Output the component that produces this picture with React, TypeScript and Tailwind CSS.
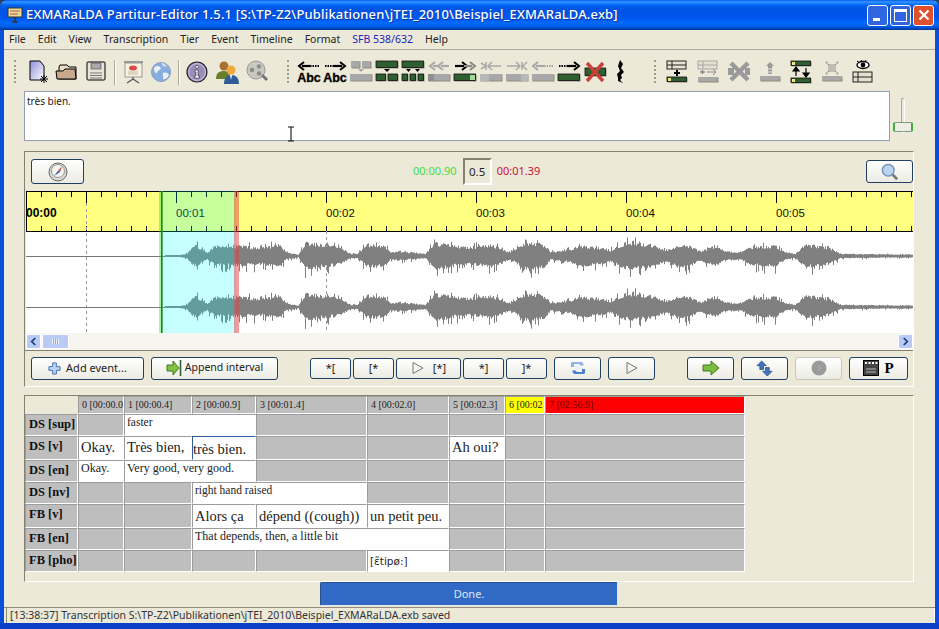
import { useMemo } from "react";
import type { ReactNode } from "react";

const SANS = "font-['Noto_Sans','Liberation_Sans',sans-serif]";
const SERIF = "font-['Liberation_Serif',serif]";

// ---- small svg parts for toolbar icons (24x24 box)
const GREEN = "#2f5f30";
const GRAY = "#a8a8a8";

function Bar({ x, y, w, h, c = GREEN }: { x: number; y: number; w: number; h: number; c?: string }) {
  const green = c === GREEN;
  return (
    <>
      <rect x={x + 0.5} y={y + 0.5} width={w} height={h} fill="#8d8a7c" />
      <rect x={x} y={y} width={w - 0.5} height={h - 0.5} fill={c} stroke={green ? "#111" : "none"} strokeWidth={green ? 0.8 : 0} />
    </>
  );
}

function Arrow({ x1, x2, y, c = "#000", dash = false }: { x1: number; x2: number; y: number; c?: string; dash?: boolean }) {
  const d = x2 > x1 ? 1 : -1;
  const mid = dash ? x1 + (x2 - x1) * 0.4 : x1;
  return (
    <>
      {dash && <path d={`M${x1} ${y}H${mid}`} stroke={c} strokeWidth="2" strokeDasharray="1.5 1" />}
      <path d={`M${mid} ${y}H${x2 - d * 3}`} stroke={c} strokeWidth="2.2" />
      <path d={`M${x2 - d * 5} ${y - 4}L${x2} ${y}L${x2 - d * 5} ${y + 4}`} fill="none" stroke={c} strokeWidth="2" />
    </>
  );
}

function Ic({ children }: { children: ReactNode }) {
  return (
    <svg viewBox="0 0 24 24" className="h-6 w-6 shrink-0">
      {children}
    </svg>
  );
}

function Grip({ className }: { className: string }) {
  return <div className={`h-[23px] w-[2px] shrink-0 border-l-2 border-dotted border-[#a09c8c] ${className}`} />;
}

function Sep({ className }: { className: string }) {
  return <div className={`h-[25px] w-[2px] shrink-0 border-l border-r border-l-[#aca899] border-r-white ${className}`} />;
}

function AbcIcon({ left }: { left: boolean }) {
  return (
    <Ic>
      {left ? <Arrow x1={22} x2={2} y={6} dash /> : <Arrow x1={2} x2={22} y={6} dash />}
      <text x="12" y="22" textAnchor="middle" fontSize="12.5" fontWeight="700" fontFamily="Liberation Sans" fill="#000" stroke="#000" strokeWidth=".3">
        Abc
      </text>
    </Ic>
  );
}

function Toolbar() {
  return (
    <div className="flex h-10 items-start pt-[10px]">
      <Grip className="ml-[10px]" />
      <div className="ml-[10px] flex gap-[5px]">
        <Ic>
          <defs>
            <linearGradient id="docg" x1="0" y1="0" x2="1" y2="1">
              <stop offset="0" stopColor="#8f8fd8" />
              <stop offset="1" stopColor="#ffffff" />
            </linearGradient>
          </defs>
          <path d="M4 1H14L18 6V20H4Z" fill="url(#docg)" stroke="#000" />
          <path d="M18 15V23M14 19H22M15 16L21 22M21 16L15 22" stroke="#000" strokeWidth="1" />
        </Ic>
        <Ic>
          <path d="M4 7L5 5H12L14 7H21V19H4Z" fill="#e9dcc0" stroke="#000" />
          <path d="M2 19L1 11H8L10 9H20L21 19Z" fill="#c9a98e" stroke="#000" />
        </Ic>
        <Ic>
          <rect x="3" y="2" width="18" height="18" rx="1" fill="#e8e4d8" stroke="#000" />
          <rect x="7" y="3" width="10" height="6" fill="#a8a8a8" stroke="#444" strokeWidth=".6" />
          <path d="M6 13H18M6 15.5H18M6 18H18" stroke="#777" />
        </Ic>
      </div>
      <Sep className="ml-[6px]" />
      <div className="ml-[5px] flex gap-[4px]">
        <Ic>
          <rect x="3" y="1" width="19" height="2" fill="#999" />
          <rect x="4" y="3" width="17" height="14" fill="#f7f1e2" stroke="#999" />
          <ellipse cx="12" cy="8" rx="4" ry="2.5" fill="#d84b4b" />
          <path d="M7 12H17M7 14H17" stroke="#c8b8a0" />
          <path d="M12 17V19M12 19L6 23M12 19L18 23" stroke="#555" strokeWidth="1.2" />
        </Ic>
        <Ic>
          <circle cx="12" cy="12" r="9.5" fill="#86aee0" stroke="#8b9cb4" />
          <path d="M5 8C8 5 10 6 12 8C11 11 8 10 8 13C6 14 5 11 5 8ZM14 13C17 12 19 13 20 15C18 19 15 20 14 19C15 17 13 15 14 13Z" fill="#e9f0f8" />
          <path d="M12 3C15 3 17 5 18 7L14 6Z" fill="#d9e6f5" />
        </Ic>
      </div>
      <Sep className="ml-[5px]" />
      <div className="ml-[5px] flex gap-[6px]">
        <Ic>
          <circle cx="12" cy="12" r="10" fill="#9b8dbb" stroke="#222" strokeWidth="1.2" />
          <circle cx="12" cy="12" r="8.4" fill="none" stroke="#d8d0e8" strokeWidth=".8" />
          <circle cx="12" cy="6.8" r="1.5" fill="#fff" stroke="#222" strokeWidth=".6" />
          <path d="M10 10H13V16H14.5V18H9.5V16H11V12H10Z" fill="#fff" stroke="#222" strokeWidth=".6" />
        </Ic>
        <Ic>
          <circle cx="9" cy="6" r="4.5" fill="#a6712f" />
          <path d="M1 19C1 13 4 11 9 11C14 11 15 14 15 19Z" fill="#6a7f2d" />
          <circle cx="16" cy="10" r="4.5" fill="#f1a83c" />
          <path d="M9 24C9 18 12 15 16 15C21 15 24 18 24 24Z" fill="#2f5c98" />
          <path d="M15 15L16 20L17 15Z" fill="#fff" />
        </Ic>
        <Ic>
          <circle cx="11" cy="10" r="9" fill="#c8c8c0" stroke="#999" />
          <circle cx="7" cy="10" r="2.2" fill="#8d8d88" />
          <circle cx="14" cy="6.5" r="2.2" fill="#8d8d88" />
          <circle cx="14" cy="13.5" r="2.2" fill="#8d8d88" />
          <path d="M17 15L22 20" stroke="#777" strokeWidth="3" />
        </Ic>
      </div>
      <Grip className="ml-[18px]" />
      <div className="ml-[8px] flex gap-[2px]">
        <AbcIcon left />
        <AbcIcon left={false} />
        <Ic>
          <Bar x={2} y={1} w={9} h={7} c={GRAY} />
          <Bar x={13} y={1} w={9} h={7} c={GRAY} />
          <path d="M9 9H15L12 12Z" fill={GRAY} />
          <Bar x={1} y={14} w={22} h={7} c={GRAY} />
        </Ic>
        <Ic>
          <Bar x={1} y={1} w={22} h={7} />
          <path d="M9 9H15L12 12Z" fill="#000" />
          <Bar x={1} y={14} w={10} h={7} />
          <Bar x={13} y={14} w={10} h={7} />
        </Ic>
        <Ic>
          <Bar x={1} y={1} w={22} h={7} />
          <path d="M5 9H10L7.5 12ZM14 9H19L16.5 12Z" fill="#000" />
          <Bar x={1} y={14} w={6} h={7} />
          <Bar x={9} y={14} w={6} h={7} />
          <Bar x={17} y={14} w={6} h={7} />
        </Ic>
        <Ic>
          <Arrow x1={12} x2={3} y={6} c={GRAY} />
          <Arrow x1={22} x2={11} y={6} c={GRAY} />
          <Bar x={1} y={14} w={22} h={7} c={GRAY} />
          <rect x="1" y="14" width="6" height="7" fill="#8f8f8f" />
        </Ic>
        <Ic>
          <Arrow x1={2} x2={14} y={6} />
          <Arrow x1={12} x2={22} y={6} c="#888" />
          <Bar x={1} y={14} w={22} h={7} />
          <rect x="17" y="15" width="5" height="5" fill="#a8d8a0" />
        </Ic>
        <Ic>
          <path d="M2 3L7 6L2 9M7 2V10M9 6H22" fill="none" stroke={GRAY} strokeWidth="1.5" />
          <path d="M13 2L9 6L13 10" fill="none" stroke={GRAY} strokeWidth="1.5" />
          <Bar x={1} y={14} w={22} h={7} c={GRAY} />
          <rect x="1" y="14" width="9" height="7" fill="#b8b8b8" />
        </Ic>
        <Ic>
          <path d="M2 6H15M11 2L15 6L11 10M17 2V10M22 2L18 6L22 10" fill="none" stroke={GRAY} strokeWidth="1.5" />
          <Bar x={1} y={14} w={22} h={7} c={GRAY} />
          <rect x="16" y="14" width="7" height="7" fill="#b8b8b8" />
        </Ic>
        <Ic>
          <Arrow x1={22} x2={2} y={6} c={GRAY} dash />
          <Bar x={1} y={14} w={22} h={7} c={GRAY} />
        </Ic>
        <Ic>
          <Arrow x1={2} x2={22} y={6} dash />
          <Bar x={1} y={14} w={22} h={7} />
        </Ic>
        <Ic>
          <Bar x={2} y={8} w={21} h={8} />
          <path d="M4 3L20 21M20 3L4 21" stroke="#c9403a" strokeWidth="3.4" />
        </Ic>
        <Ic>
          <path d="M11 0L14 4L12 8L15 12L12 15L13 18L11 20L14 23L9 21L9 18L8 14L11 11L9 6Z" fill="#000" />
        </Ic>
      </div>
      <Grip className="ml-[21px]" />
      <div className="ml-[9px] flex gap-[7px]">
        <Ic>
          <rect x="2" y="1" width="19" height="8" fill="#e6e0d0" stroke="#222" />
          <path d="M2 5H21M7 1V9" stroke="#222" />
          <path d="M12 10V16M9 13H15" stroke="#000" strokeWidth="2" />
          <Bar x={2} y={17} w={20} h={5} />
          <rect x="3" y="18" width="3" height="3" fill="#f3e58a" />
        </Ic>
        <Ic>
          <rect x="2" y="1" width="19" height="8" fill="#e6e0d0" stroke={GRAY} />
          <path d="M2 5H21M7 1V9" stroke={GRAY} />
          <path d="M4 12H9M6.5 10V14" stroke="#888" strokeWidth="1.4" />
          <path d="M11 12H20M17 9L20 12L17 15" fill="none" stroke="#888" />
          <Bar x={2} y={17} w={20} h={5} c={GRAY} />
        </Ic>
        <Ic>
          <path d="M4 3L21 20M21 3L4 20" stroke="#9a9a9a" strokeWidth="4.5" />
          <rect x="1" y="8" width="6" height="7" fill="#9a9a9a" />
          <rect x="18" y="8" width="5" height="7" fill="#9a9a9a" />
        </Ic>
        <Ic>
          <path d="M12 2L16 6H14V14H10V6H8Z" fill="#999" />
          <path d="M10 9H14M10 12H14" stroke="#ece9d8" />
          <Bar x={2} y={16} w={20} h={5} c={GRAY} />
        </Ic>
        <Ic>
          <Bar x={2} y={1} w={20} h={5} />
          <rect x="3" y="2" width="3" height="3" fill="#f3e58a" />
          <path d="M7 16V9M4 11L7 7L10 11ZM17 8V15M14 13L17 17L20 13Z" fill="#000" stroke="#000" strokeWidth="1.2" />
          <Bar x={2} y={18} w={20} h={5} />
          <rect x="3" y="19" width="3" height="3" fill="#f3e58a" />
        </Ic>
        <Ic>
          <path d="M6 2L18 14M18 2L6 14" stroke="#a0a0a0" strokeWidth="2" strokeDasharray="2 1" />
          <circle cx="12" cy="8" r="4" fill="#bdbdb4" />
          <Bar x={2} y={16} w={20} h={5} c={GRAY} />
        </Ic>
        <Ic>
          <ellipse cx="12" cy="5" rx="6" ry="3.5" fill="#fff" stroke="#000" strokeWidth="1.4" />
          <circle cx="12" cy="5" r="2.4" fill="#000" />
          <path d="M6 1L9 3M10 0L11 2M15 0L14 2" stroke="#000" />
          <rect x="2" y="12" width="19" height="10" fill="#e6e0d0" stroke="#222" />
          <path d="M2 17H21M7 12V22" stroke="#222" />
        </Ic>
      </div>
    </div>
  );
}

// ---- waveform
const ENVELOPE: [number, number][] = [
  [165, 1], [178, 1], [186, 3], [195, 15], [200, 10], [207, 5], [215, 14], [230, 12], [240, 14], [250, 12], [265, 12],
  [280, 16], [285, 5], [298, 2], [305, 18], [325, 15], [340, 12], [350, 3], [357, 3], [367, 16], [385, 13], [390, 5],
  [400, 6], [425, 3], [435, 18], [470, 11], [490, 16], [510, 5], [525, 18], [545, 15], [550, 5], [570, 9], [582, 14],
  [600, 11], [610, 8], [625, 18], [650, 16], [665, 8], [680, 15], [690, 13], [700, 6], [715, 14], [725, 6], [740, 5],
  [750, 12], [775, 14], [785, 5], [795, 3], [805, 16], [830, 11], [840, 3], [912, 2],
];

function envAt(x: number) {
  for (let i = 1; i < ENVELOPE.length; i++) {
    const [x0, a0] = ENVELOPE[i - 1];
    const [x1, a1] = ENVELOPE[i];
    if (x <= x1) return a0 + ((a1 - a0) * (x - x0)) / (x1 - x0);
  }
  return 2;
}

function makeWave(center: number) {
  let seed = 7;
  const rnd = () => {
    seed = (seed * 16807) % 2147483647;
    return seed / 2147483647;
  };
  let d = "";
  for (let x = 165; x < 913; x++) {
    const env = envAt(x);
    const up = Math.max(1, env * (0.55 + 0.25 * rnd() + (rnd() > 0.8 ? 0.35 * rnd() : 0)));
    const down = Math.max(1, env * (0.55 + 0.25 * rnd() + (rnd() > 0.75 ? 0.6 * rnd() : 0)));
    d += `M${x - 26 + 0.5} ${center - up}V${center + down}`;
  }
  return d;
}

function Timeline() {
  const wave1 = useMemo(() => makeWave(65), []);
  const wave2 = useMemo(() => makeWave(116), []);
  const minor = Array.from({ length: 60 }, (_, i) => i * 15 + 0.5);
  const labels = [
    [150, "00:01"],
    [300, "00:02"],
    [450, "00:03"],
    [600, "00:04"],
    [750, "00:05"],
  ] as const;
  return (
    <svg viewBox="0 0 887 142" className="ml-px block h-[142px] w-[887px] bg-white">
      <rect x="0" y="0" width="887" height="41" fill="#ffff80" />
      <path d="M0 0.5H887M0 40.5H887" stroke="#000" />
      {minor.map((x) => (
        <path key={x} d={`M${x} 0V6M${x} 35V40`} stroke="#000" />
      ))}
      <path d="M0.5 0V40M60.5 0V12M150.5 0V12M300.5 0V12M450.5 0V12M600.5 0V12M750.5 0V12" stroke="#000" />
      <path d="M60.5 12V142M300.5 40V142" stroke="#999" strokeDasharray="3 3" />
      <path d="M0 65.5H140M0 116.5H140" stroke="#777" />
      <path d={wave1} stroke="#808080" />
      <path d={wave2} stroke="#808080" />
      <text x="0" y="26" fontSize="12" fontWeight="700" fontFamily="Liberation Sans" fill="#000">
        00:00
      </text>
      {labels.map(([x, t]) => (
        <text key={t} x={x} y="26" fontSize="11.5" fontFamily="Liberation Sans" fill="#111">
          {t}
        </text>
      ))}
      <rect x="136" y="0" width="74" height="142" fill="#00ffff" opacity=".22" />
      <rect x="133" y="0" width="4" height="142" fill="#38d038" opacity=".4" />
      <rect x="135" y="0" width="1.5" height="142" fill="#0f8a1f" />
      <rect x="208" y="0" width="5" height="142" fill="#e04040" opacity=".5" />
    </svg>
  );
}

function ScrollBtn({ dir }: { dir: "l" | "r" }) {
  return (
    <div className="flex h-[15px] w-[15px] items-center justify-center rounded-[2px] border border-white bg-[#b9cbf5]">
      <svg viewBox="0 0 8 10" className="h-[9px] w-[7px]">
        <path d={dir === "l" ? "M6 1L2 5L6 9" : "M2 1L6 5L2 9"} fill="none" stroke="#1d3b80" strokeWidth="2" />
      </svg>
    </div>
  );
}

function Btn({ className, children, disabled }: { className: string; children?: ReactNode; disabled?: boolean }) {
  return (
    <div
      className={`flex shrink-0 items-center justify-center rounded-[3px] border bg-linear-to-b from-white to-[#ecebe2] text-[#222] ${
        disabled ? "border-[#c9c7ba]" : "border-[#1f3f63]"
      } ${className}`}
    >
      {children}
    </div>
  );
}

function Play() {
  return (
    <svg viewBox="0 0 14 14" className="h-[14px] w-[14px]">
      <path d="M2 1.5L12 7L2 12.5Z" fill="#f4f4f4" stroke="#777" />
    </svg>
  );
}

function GreenArrow() {
  return (
    <svg viewBox="0 0 18 16" className="h-4 w-[18px]">
      <path d="M1 5H9V1L17 8L9 15V11H1Z" fill="#7cbc3c" stroke="#3f7a20" />
    </svg>
  );
}

function Panel() {
  return (
    <div className="ml-5 h-[236px] w-[890px] border border-b-white border-l-[#85816f] border-r-white border-t-[#85816f]">
      <div className="flex h-[39px] items-center">
        <Btn className="ml-[6px] h-[25px] w-[53px]">
          <svg viewBox="0 0 24 20" className="h-5 w-6">
            <circle cx="12" cy="10" r="9" fill="#d8d8d4" stroke="#666" />
            <circle cx="12" cy="9" r="6.5" fill="#f4f4f0" stroke="#999" />
            <path d="M16 4L12 9L14 10Z" fill="#cc3a3a" />
            <path d="M8 14L12 9L14 10Z" fill="#2858b8" />
          </svg>
        </Btn>
        <div className="ml-[329px] text-[11px] text-[#40e040]">00:00.90</div>
        <div className="ml-[6px] flex h-[27px] w-[29px] items-center justify-center border-2 border-b-white border-l-[#85816f] border-r-white border-t-[#85816f] text-[11.5px] text-[#222]">
          0.5
        </div>
        <div className="ml-[5px] text-[11px] text-[#d01030]">00:01.39</div>
        <Btn className="ml-auto h-[23px] w-[47px]">
          <svg viewBox="0 0 20 20" className="h-[18px] w-[18px]">
            <circle cx="8" cy="8" r="6.5" fill="#bcd2ee" stroke="#6d8fb8" strokeWidth="1.5" />
            <path d="M13 13L18 18" stroke="#777" strokeWidth="3" />
          </svg>
        </Btn>
      </div>
      <Timeline />
      <div className="ml-px flex h-[17px] w-[887px] items-center justify-between bg-[#f6f5ef]">
        <div className="flex items-center gap-px">
          <ScrollBtn dir="l" />
          <div className="flex h-[15px] w-[27px] items-center justify-center rounded-[2px] border border-white bg-[#b9cbf5]">
            <div className="h-[5px] w-[7px] bg-[repeating-linear-gradient(90deg,#eef2fc_0,#eef2fc_1px,#8ea8dc_1px,#8ea8dc_2px)]" />
          </div>
        </div>
        <ScrollBtn dir="r" />
      </div>
      <div className="flex h-[35px] items-center border-t border-[#85816f] text-[11px]">
        <Btn className="ml-[6px] h-[23px] w-[113px] gap-[5px]">
          <svg viewBox="0 0 14 14" className="h-[13px] w-[13px]">
            <path d="M5 1H9V5H13V9H9V13H5V9H1V5H5Z" fill="#bcd4f4" stroke="#3a68b0" />
          </svg>
          Add event...
        </Btn>
        <Btn className="ml-[7px] h-[23px] w-[127px] gap-[3px] text-[10.5px]">
          <svg viewBox="0 0 16 16" className="h-4 w-4">
            <path d="M1 5H7V1L13 8L7 15V11H1Z" fill="#84c040" stroke="#3f7a20" />
            <path d="M14.5 0V16" stroke="#2f5f30" strokeWidth="1.6" />
          </svg>
          Append interval
        </Btn>
        <Btn className="ml-[32px] h-[21px] w-[41px]">*[</Btn>
        <Btn className="ml-[2px] h-[21px] w-[41px]">[*</Btn>
        <Btn className="ml-[2px] h-[21px] w-[65px] gap-[8px]">
          <Play />
          [*]
        </Btn>
        <Btn className="ml-[2px] h-[21px] w-[41px]">*]</Btn>
        <Btn className="ml-[2px] h-[21px] w-[41px]">]*</Btn>
        <Btn className="ml-[7px] h-[23px] w-[47px]">
          <svg viewBox="0 0 16 16" className="h-4 w-4">
            <path d="M2 2H12L14 5L11 6L9 4H4V7H1V3Z" fill="#8fb4e6" />
            <path d="M14 14H4L2 11L5 10L7 12H12V9H15V13Z" fill="#4f82c8" />
            <path d="M5 5L11 8L5 11Z" fill="#e9f0fa" />
          </svg>
        </Btn>
        <Btn className="ml-[7px] h-[23px] w-[47px]">
          <Play />
        </Btn>
        <Btn className="ml-[32px] h-[23px] w-[47px]">
          <GreenArrow />
        </Btn>
        <Btn className="ml-[7px] h-[23px] w-[47px]">
          <svg viewBox="0 0 18 18" className="h-[17px] w-[17px]">
            <path d="M6 1L11 6H8V10H4V6H1Z" fill="#3f74c0" stroke="#1f3f78" strokeWidth=".7" />
            <path d="M12 17L7 12H10V8H14V12H17Z" fill="#3f74c0" stroke="#1f3f78" strokeWidth=".7" />
          </svg>
        </Btn>
        <Btn disabled className="ml-[7px] h-[23px] w-[47px]">
          <svg viewBox="0 0 16 16" className="h-4 w-4">
            <circle cx="8" cy="8" r="7.5" fill="#9a9a9a" />
            <path d="M6.5 5L9.5 8L6.5 11" fill="none" stroke="#b8b8b8" />
          </svg>
        </Btn>
        <Btn className="ml-[7px] h-[23px] w-[59px] gap-[5px]">
          <svg viewBox="0 0 16 16" className="h-4 w-4">
            <rect x="0.5" y="0.5" width="15" height="15" fill="#444" stroke="#000" />
            <path d="M2 3H4M5.5 3H7.5M9 3H11M12.5 3H14.5" stroke="#fff" strokeWidth="2" />
            <path d="M3 9H13M3 12H13" stroke="#bbb" />
          </svg>
          <span className={`${SERIF} text-[15px] font-bold text-black`}>P</span>
        </Btn>
      </div>
    </div>
  );
}

// ---- partitur grid
const CELL = "overflow-hidden whitespace-nowrap border-b border-l border-r border-t border-b-white border-l-[#9c9c9c] border-r-white border-t-[#9c9c9c]";
const HEAD = `${CELL} bg-[#bebebe] pl-[3px] pt-[2px] text-[10px] leading-[12px] text-[#222]`;
const TIER = `${CELL} bg-[#bebebe] pl-[3px] pt-[2px] text-[12.5px] font-bold leading-[15px] text-[#111]`;
const GREY = `${CELL} bg-[#bebebe]`;
const WHITE = `${CELL} bg-white pl-[2px] text-[#222]`;

function Row({ tier, cells }: { tier: string; cells: ReactNode }) {
  return (
    <>
      <div className={TIER}>{tier}</div>
      {cells}
    </>
  );
}

function Greys({ n }: { n: number }) {
  return (
    <>
      {Array.from({ length: n }, (_, i) => (
        <div key={i} className={GREY} />
      ))}
    </>
  );
}

function Partitur() {
  return (
    <div className="ml-5 mt-[8px] h-[187px] w-[890px] border border-b-white border-l-[#85816f] border-r-white border-t-[#85816f]">
      <div
        className={`${SERIF} grid w-[720px] grid-cols-[53px_46px_68px_64px_111px_82px_56px_40px_200px] grid-rows-[18px_22px_24px_22px_22px_24px_22px_22px]`}
      >
        <div />
        <div className={HEAD}>0 [00:00.0</div>
        <div className={HEAD}>1 [00:00.4]</div>
        <div className={HEAD}>2 [00:00.9]</div>
        <div className={HEAD}>3 [00:01.4]</div>
        <div className={HEAD}>4 [00:02.0]</div>
        <div className={HEAD}>5 [00:02.3]</div>
        <div className={`${HEAD} bg-[#ffff00]`}>6 [00:02</div>
        <div className={`${HEAD} bg-[#ff0000] text-[#700000]`}>7 [02:56.9]</div>

        <Row
          tier="DS [sup]"
          cells={
            <>
              <Greys n={1} />
              <div className={`${WHITE} col-span-2 text-[11.5px] leading-[14px]`}>faster</div>
              <Greys n={5} />
            </>
          }
        />
        <Row
          tier="DS [v]"
          cells={
            <>
              <div className={`${WHITE} pt-[1px] text-[14.5px] leading-[19px]`}>Okay.</div>
              <div className={`${WHITE} pt-[1px] text-[14.5px] leading-[19px]`}>Très bien,</div>
              <div className="overflow-hidden border border-[#2e5c9a] border-b-white border-r-white bg-white pt-[2px] text-[14.5px] leading-[20px] text-[#222]">
                très bien.
              </div>
              <Greys n={2} />
              <div className={`${WHITE} pt-[1px] text-[14.5px] leading-[19px]`}>Ah oui?</div>
              <Greys n={2} />
            </>
          }
        />
        <Row
          tier="DS [en]"
          cells={
            <>
              <div className={`${WHITE} text-[12px] leading-[14px]`}>Okay.</div>
              <div className={`${WHITE} col-span-2 text-[12px] leading-[14px]`}>Very good, very good.</div>
              <Greys n={5} />
            </>
          }
        />
        <Row
          tier="DS [nv]"
          cells={
            <>
              <Greys n={2} />
              <div className={`${WHITE} col-span-2 text-[11.5px] leading-[14px]`}>right hand raised</div>
              <Greys n={4} />
            </>
          }
        />
        <Row
          tier="FB [v]"
          cells={
            <>
              <Greys n={2} />
              <div className={`${WHITE} pt-[2px] text-[14.5px] leading-[19px]`}>Alors ça</div>
              <div className={`${WHITE} pt-[2px] text-[14.5px] leading-[19px]`}>dépend ((cough))</div>
              <div className={`${WHITE} pt-[2px] text-[14.5px] leading-[19px]`}>un petit peu.</div>
              <Greys n={3} />
            </>
          }
        />
        <Row
          tier="FB [en]"
          cells={
            <>
              <Greys n={2} />
              <div className={`${WHITE} col-span-3 text-[12px] leading-[15px]`}>That depends, then, a little bit</div>
              <Greys n={3} />
            </>
          }
        />
        <Row
          tier="FB [pho]"
          cells={
            <>
              <Greys n={3} />
              <div className={GREY} />
              <div className={`${WHITE} pt-[4px] font-['DejaVu_Sans',sans-serif] text-[10.5px] leading-[12px]`}>[ɛ̃tipø:]</div>
              <Greys n={3} />
            </>
          }
        />
      </div>
    </div>
  );
}

export default function App() {
  return (
    <div className={`${SANS} h-[629px] w-[939px] overflow-hidden bg-[#2a3f6a] text-[11px]`}>
      <div className="flex h-[30px] items-center rounded-t-[7px] bg-[linear-gradient(180deg,#0058ee_0%,#3593ff_6%,#127dff_12%,#0262ee_18%,#0054e3_30%,#0055eb_56%,#005bf5_66%,#026afe_76%,#0062ef_86%,#0052d6_92%,#0040ab_97%,#003092_100%)] pl-[7px] pr-[5px]">
        <svg viewBox="0 0 16 16" className="h-4 w-4 shrink-0">
          <rect x="1" y="1" width="14" height="9" fill="#e8dc9a" stroke="#333" />
          <path d="M3 4H13M3 7H11" stroke="#b8543a" />
          <path d="M8 10V15M5 15H11" stroke="#333" strokeWidth="1.4" />
        </svg>
        <div className="ml-[3px] text-[13px] font-medium tracking-[0.15px] text-white [text-shadow:1px_1px_#0f3a9c]">
          EXMARaLDA Partitur-Editor 1.5.1 [S:\TP-Z2\Publikationen\jTEI_2010\Beispiel_EXMARaLDA.exb]
        </div>
        <div className="ml-auto flex gap-[2px]">
          <div className="flex h-[21px] w-[21px] items-end rounded-[3px] border border-white bg-[#2f66e0] pb-[4px] pl-[5px]">
            <div className="h-[3px] w-[7px] bg-white" />
          </div>
          <div className="flex h-[21px] w-[21px] items-center justify-center rounded-[3px] border border-white bg-[#2f66e0]">
            <div className="h-[13px] w-[13px] border border-t-[3px] border-white" />
          </div>
          <div className="flex h-[21px] w-[21px] items-center justify-center rounded-[3px] border border-white bg-[#e0502c]">
            <svg viewBox="0 0 12 12" className="h-3 w-3">
              <path d="M1.5 1.5L10.5 10.5M10.5 1.5L1.5 10.5" stroke="#fff" strokeWidth="2.2" />
            </svg>
          </div>
        </div>
      </div>
      <div className="relative mx-0 h-[593px] border-x-4 border-[#0a4fdc] bg-[#ece9d8]">
        <div className="flex h-[20px] items-center gap-[12px] border-b border-[#aca899] pl-[5px] text-[10.5px] leading-none text-[#222]">
          <span>File</span>
          <span>Edit</span>
          <span>View</span>
          <span>Transcription</span>
          <span>Tier</span>
          <span>Event</span>
          <span>Timeline</span>
          <span>Format</span>
          <span className="text-[#2424b8]">SFB 538/632</span>
          <span>Help</span>
        </div>
        <Toolbar />
        <div className="ml-5 mt-px flex h-[50px]">
          <div className="h-[50px] w-[866px] border border-[#8fa0ae] bg-white px-[2px] pt-[2px] text-[10px] leading-[14px] text-[#222]">
            très bien.
          </div>
          <div className="relative ml-[3px] h-[50px] w-[20px]">
            <div className="ml-[8px] mt-[7px] h-[35px] w-[4px] rounded-[2px] border border-[#aaa89a] border-b-white border-r-white" />
            <div className="absolute left-0 top-[31px] h-[10px] w-[20px] rounded-[2px] border border-x-2 border-[#7f9e7f] border-x-[#3fae3f] bg-[#eeeee6]" />
          </div>
        </div>
        {/* text cursor */}
        <svg viewBox="0 0 8 16" className="absolute left-[283px] top-[96px] h-4 w-2">
          <path d="M1 1H7M4 1V15M1 15H7" stroke="#111" strokeWidth="1.1" fill="none" />
        </svg>
        <div className="mt-[10px]">
          <Panel />
        </div>
        <Partitur />
        <div className="ml-[316px] flex h-[24px] w-[298px] items-center justify-center rounded-[2px] border border-[#e8e8e8] border-l-[#27508f] border-t-[#27508f] bg-[#316ac5] text-[11px] text-[#dfe6f4]">
          Done.
        </div>
        <div className="mt-[1px] h-[16px] border-t border-[#8f8c7c] pl-[1px]">
          <div className="ml-px flex h-[15px] items-center border-l border-r border-l-[#8f8c7c] border-r-white pl-[3px] text-[10.5px] leading-none text-[#333]">
            [13:38:37] Transcription S:\TP-Z2\Publikationen\jTEI_2010\Beispiel_EXMARaLDA.exb saved
          </div>
        </div>
      </div>
      <div className="h-[6px] bg-[#0a3fc8]" />
    </div>
  );
}
